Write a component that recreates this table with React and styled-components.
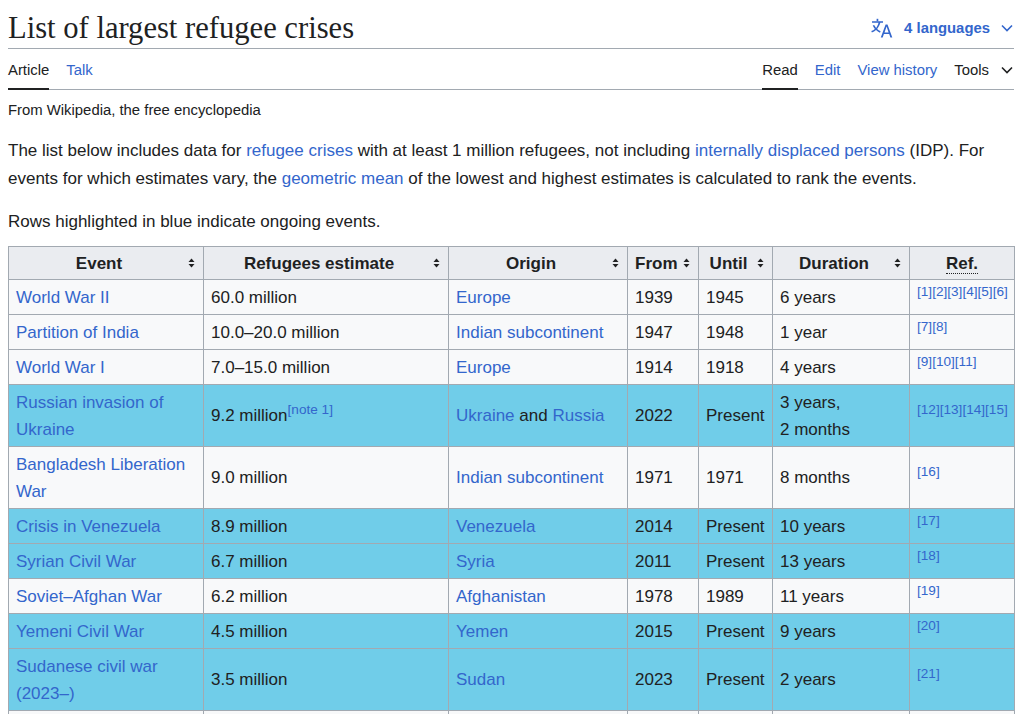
import React from "react";
import styled, { createGlobalStyle } from "styled-components";

const GlobalStyle = createGlobalStyle`
  html, body {
    margin: 0;
    padding: 0;
    background: #ffffff;
  }
  body {
    font-family: "Liberation Sans", Arial, sans-serif;
    color: #202122;
  }
`;

const rows = [
  { event: "World War II", est: "60.0 million", origin: ["Europe"], from: "1939", until: "1945", dur: ["6 years"], refs: [1, 2, 3, 4, 5, 6] },
  { event: "Partition of India", est: "10.0–20.0 million", origin: ["Indian subcontinent"], from: "1947", until: "1948", dur: ["1 year"], refs: [7, 8] },
  { event: "World War I", est: "7.0–15.0 million", origin: ["Europe"], from: "1914", until: "1918", dur: ["4 years"], refs: [9, 10, 11] },
  { event: "Russian invasion of Ukraine", est: "9.2 million", note: "note 1", origin: ["Ukraine", "Russia"], from: "2022", until: "Present", dur: ["3 years,", "2 months"], refs: [12, 13, 14, 15], ongoing: true },
  { event: "Bangladesh Liberation War", est: "9.0 million", origin: ["Indian subcontinent"], from: "1971", until: "1971", dur: ["8 months"], refs: [16] },
  { event: "Crisis in Venezuela", est: "8.9 million", origin: ["Venezuela"], from: "2014", until: "Present", dur: ["10 years"], refs: [17], ongoing: true },
  { event: "Syrian Civil War", est: "6.7 million", origin: ["Syria"], from: "2011", until: "Present", dur: ["13 years"], refs: [18], ongoing: true },
  { event: "Soviet–Afghan War", est: "6.2 million", origin: ["Afghanistan"], from: "1978", until: "1989", dur: ["11 years"], refs: [19] },
  { event: "Yemeni Civil War", est: "4.5 million", origin: ["Yemen"], from: "2015", until: "Present", dur: ["9 years"], refs: [20], ongoing: true },
  { event: "Sudanese civil war (2023–)", est: "3.5 million", origin: ["Sudan"], from: "2023", until: "Present", dur: ["2 years"], refs: [21], ongoing: true },
  { event: "Afghanistan conflict", est: "3.0 million", origin: ["Afghanistan"], from: "1978", until: "Present", dur: ["46 years"], refs: [22] },
];

const columns = [
  { label: "Event", width: 195 },
  { label: "Refugees estimate", width: 245 },
  { label: "Origin", width: 179 },
  { label: "From", width: 71 },
  { label: "Until", width: 74 },
  { label: "Duration", width: 137 },
  { label: "Ref.", width: 105, unsortable: true },
];

const SortIcon = () => (
  <svg width="7" height="10" viewBox="0 0 7 10">
    <path d="M3.5 0.5 L6.5 4 H0.5 Z" fill="#202122" />
    <path d="M3.5 9.5 L6.5 6 H0.5 Z" fill="#202122" />
  </svg>
);

const TranslateIcon = () => (
  <svg width="22" height="20" viewBox="0 0 22 20" fill="#3366cc">
    <path d="M1 3.2h11v1.6H9.3C8.7 7.2 7.6 9.2 6.1 10.9c1 .9 2.2 1.7 3.5 2.3l-.6 1.5c-1.5-.7-2.8-1.6-4-2.6-1.2 1-2.6 1.9-4.1 2.5L.3 13.1c1.4-.6 2.6-1.3 3.6-2.2C3 9.8 2.2 8.6 1.7 7.3h1.7c.4.9 1 1.8 1.7 2.6 1.1-1.4 1.9-3 2.4-5.1H1z" />
    <path d="M5.6 0.8h1.7v2.4H5.6z" />
    <path d="M14.6 6.5h1.9l4.8 13h-1.9l-1.2-3.4h-5.3l-1.2 3.4h-1.9zm-1.1 8h4.1l-2-5.9z" />
  </svg>
);

const Chevron = ({ color = "#202122" }) => (
  <svg width="12" height="8" viewBox="0 0 12 8">
    <path d="M1 1.5 L6 6.5 L11 1.5" fill="none" stroke={color} strokeWidth="1.6" />
  </svg>
);

const App = () => {
  return (
    <>
      <GlobalStyle />
      <Page>
        <TitleBar>
          <Title>List of largest refugee crises</Title>
          <LangButton>
            <TranslateIcon />
            <LangLabel>4 languages</LangLabel>
            <Chevron color="#3366cc" />
          </LangButton>
        </TitleBar>
        <TabBar>
          <TabGroup>
            <Tab $active>Article</Tab>
            <Tab $link>Talk</Tab>
          </TabGroup>
          <TabGroup>
            <Tab $active>Read</Tab>
            <Tab $link>Edit</Tab>
            <Tab $link>View history</Tab>
            <Tab>
              Tools <Chevron />
            </Tab>
          </TabGroup>
        </TabBar>
        <Tagline>From Wikipedia, the free encyclopedia</Tagline>
        <Para>
          The list below includes data for <A>refugee crises</A> with at least 1 million refugees, not including{" "}
          <A>internally displaced persons</A> (IDP). For events for which estimates vary, the <A>geometric mean</A> of
          the lowest and highest estimates is calculated to rank the events.
        </Para>
        <Para $tight>Rows highlighted in blue indicate ongoing events.</Para>
        <Table>
          <colgroup>
            {columns.map((c) => (
              <col key={c.label} style={{ width: c.width }} />
            ))}
          </colgroup>
          <thead>
            <tr>
              {columns.map((c) =>
                c.unsortable ? (
                  <Th key={c.label} $plain>
                    <Abbr>{c.label}</Abbr>
                  </Th>
                ) : (
                  <Th key={c.label}>
                    {c.label}
                    <SortSlot>
                      <SortIcon />
                    </SortSlot>
                  </Th>
                )
              )}
            </tr>
          </thead>
          <tbody>
            {rows.map((r) => (
              <Row key={r.event} $ongoing={r.ongoing}>
                <Td>
                  <A>{r.event}</A>
                </Td>
                <Td>
                  {r.est}
                  {r.note && <Sup>[{r.note}]</Sup>}
                </Td>
                <Td>
                  {r.origin.map((o, i) => (
                    <React.Fragment key={o}>
                      {i > 0 && " and "}
                      <A>{o}</A>
                    </React.Fragment>
                  ))}
                </Td>
                <Td>{r.from}</Td>
                <Td>{r.until}</Td>
                <Td>
                  {r.dur.map((d, i) => (
                    <React.Fragment key={d}>
                      {i > 0 && " "}
                      <NoWrap>{d}</NoWrap>
                    </React.Fragment>
                  ))}
                </Td>
                <Td $nowrap>
                  {r.refs.map((n) => (
                    <Sup key={n}>[{n}]</Sup>
                  ))}
                </Td>
              </Row>
            ))}
          </tbody>
        </Table>
      </Page>
    </>
  );
};

const Page = styled.div`
  padding: 0 10px 0 8px;
`;

const TitleBar = styled.header`
  display: flex;
  align-items: center;
  justify-content: space-between;
  border-bottom: 1px solid #a2a9b1;
  padding: 9px 0 1px;
`;

const Title = styled.h1`
  margin: 0;
  font-family: "Liberation Serif", "Times New Roman", serif;
  font-weight: normal;
  font-size: 30.6px;
  line-height: 38px;
  color: #202122;
`;

const LangButton = styled.div`
  display: flex;
  align-items: center;
  color: #3366cc;
  font-weight: bold;
  font-size: 14.875px;
  padding-right: 1px;
`;

const LangLabel = styled.span`
  margin: 0 11px 0 11px;
`;

const TabBar = styled.nav`
  display: flex;
  justify-content: space-between;
  border-bottom: 1px solid #a2a9b1;
  height: 40px;
`;

const TabGroup = styled.div`
  display: flex;
  gap: 17px;
`;

const Tab = styled.div`
  display: flex;
  align-items: center;
  gap: 12px;
  font-size: 14.875px;
  color: ${(p) => (p.$link ? "#3366cc" : "#202122")};
  border-bottom: 2px solid ${(p) => (p.$active ? "#202122" : "transparent")};
  margin-bottom: -1px;
  padding-top: 2px;
  svg {
    margin-right: 1px;
  }
`;

const Tagline = styled.div`
  font-size: 14.875px;
  line-height: 20px;
  margin-top: 10px;
`;

const Para = styled.p`
  font-size: 17px;
  line-height: 28px;
  margin: ${(p) => (p.$tight ? "15px 0 10px" : "17px 0 0")};
`;

const A = styled.a`
  color: #3366cc;
  text-decoration: none;
`;

const Table = styled.table`
  width: 1006px;
  table-layout: fixed;
  border-collapse: collapse;
  border: 1px solid #a2a9b1;
  font-size: 17px;
  line-height: 27px;
  color: #202122;
`;

const Th = styled.th`
  position: relative;
  background: #eaecf0;
  border: 1px solid #a2a9b1;
  font-weight: bold;
  text-align: center;
  line-height: 25px;
  padding: 3.5px ${(p) => (p.$plain ? "7px" : "21px")} 3.5px 7px;
  white-space: nowrap;
`;

const SortSlot = styled.span`
  position: absolute;
  right: 8px;
  top: 50%;
  transform: translateY(-50%);
  display: flex;
`;

const Abbr = styled.span`
  border-bottom: 1px dotted #202122;
  line-height: 1.1;
`;

const Row = styled.tr`
  background: ${(p) => (p.$ongoing ? "#70cde9" : "#f8f9fa")};
`;

const Td = styled.td`
  border: 1px solid #a2a9b1;
  padding: 3.5px 7px;
  vertical-align: middle;
  white-space: ${(p) => (p.$nowrap ? "nowrap" : "normal")};
  overflow: visible;
`;

const NoWrap = styled.span`
  white-space: nowrap;
`;

const Sup = styled.sup`
  color: #3366cc;
  line-height: 1;
  vertical-align: super;
  font-size: 80%;
`;

export default App;
